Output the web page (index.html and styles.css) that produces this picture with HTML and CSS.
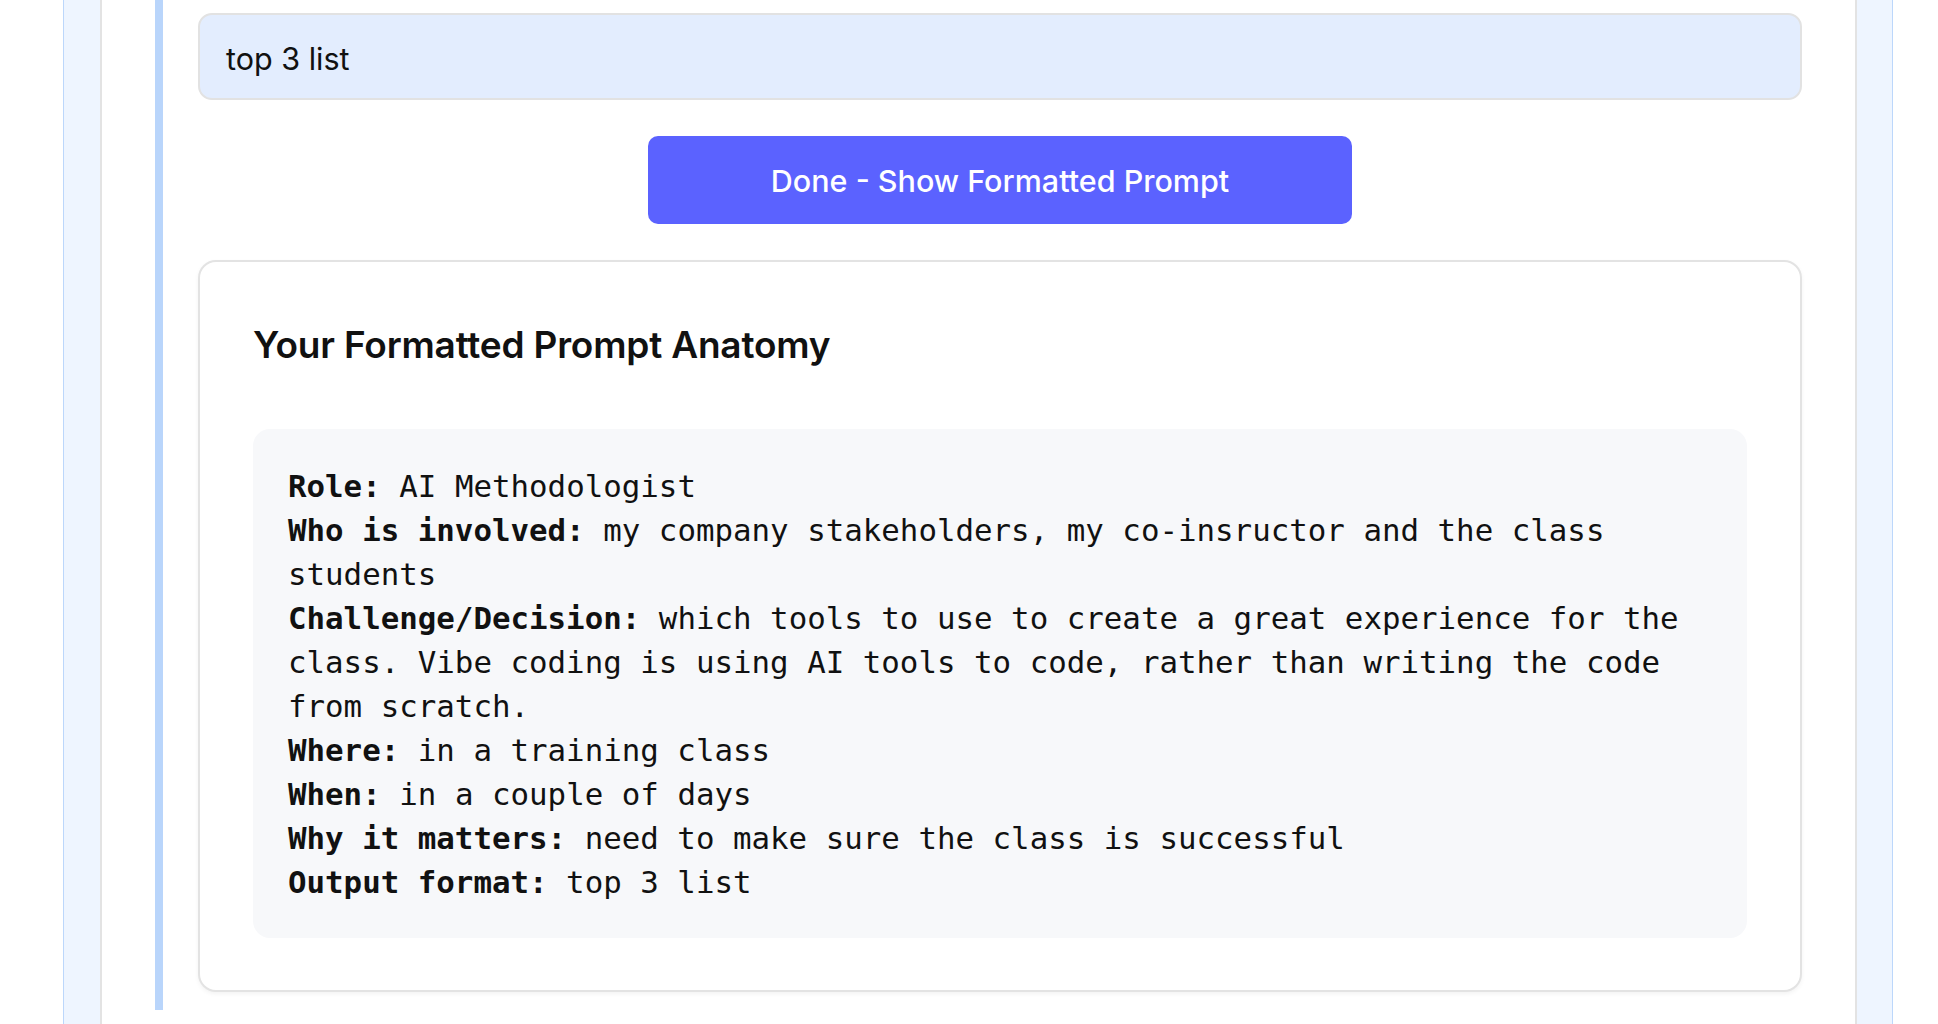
FILE: index.html
```html
<!DOCTYPE html>
<html lang="en">
<head>
<meta charset="utf-8">
<title>Formatted Prompt</title>
<link rel="stylesheet" href="styles.css">
</head>
<body>
<div class="outer">
  <div class="inner">
    <section class="step">
      <div class="answer">top 3 list</div>
      <div class="actions">
        <button class="done-btn" type="button">Done - Show Formatted Prompt</button>
      </div>
      <div class="result-card">
        <h3 class="result-title">Your Formatted Prompt Anatomy</h3>
        <pre class="prompt"><b>Role:</b> AI Methodologist
<b>Who is involved:</b> my company stakeholders, my co-insructor and the class students
<b>Challenge/Decision:</b> which tools to use to create a great experience for the class. Vibe coding is using AI tools to code, rather than writing the code from scratch.
<b>Where:</b> in a training class
<b>When:</b> in a couple of days
<b>Why it matters:</b> need to make sure the class is successful
<b>Output format:</b> top 3 list</pre>
      </div>
    </section>
  </div>
</div>
</body>
</html>
```

FILE: styles.css
```css
* {
  box-sizing: border-box;
}

html, body {
  margin: 0;
  padding: 0;
  background: #ffffff;
  height: 100%;
  overflow: hidden;
}

body {
  font-family: Inter, "Noto Sans", "Liberation Sans", sans-serif;
  color: #111111;
}

.outer {
  margin-left: 63px;
  width: 1830px;
  min-height: 1024px;
  background: #eef5ff;
  border-left: 1px solid #bcd7fb;
  border-right: 1px solid #bcd7fb;
  padding: 0 35px 0 36px;
}

.inner {
  background: #ffffff;
  border-left: 2px solid #e3e3e3;
  border-right: 2px solid #e3e3e3;
  min-height: 1024px;
  padding: 0 53px;
}

.step {
  border-left: 8px solid #b9d5fb;
  padding: 13px 0 18px 35px;
}

.answer {
  height: 87px;
  background: #e3edfe;
  border: 2px solid #e2e2e2;
  border-radius: 14px;
  padding: 3px 26px 0;
  display: flex;
  align-items: center;
  font-size: 30.5px;
  color: #111111;
}

.actions {
  display: flex;
  justify-content: center;
  margin-top: 36px;
}

.done-btn {
  width: 704px;
  height: 88px;
  border: none;
  border-radius: 10px;
  background: #5b62ff;
  color: #ffffff;
  font-family: Inter, "Noto Sans", "Liberation Sans", sans-serif;
  font-size: 30.5px;
  font-weight: 500;
  padding: 0;
}

.result-card {
  margin-top: 36px;
  border: 2px solid #e3e3e3;
  border-radius: 18px;
  background: #ffffff;
  box-shadow: 0 2px 4px rgba(0, 0, 0, 0.05);
  padding: 61px 53px 52px;
}

.result-title {
  margin: 0 0 62px;
  font-size: 37px;
  line-height: 44px;
  font-weight: 600;
  letter-spacing: -0.2px;
  color: #111111;
}

.prompt {
  margin: 0;
  background: #f7f8fa;
  border-radius: 17px;
  padding: 35px 35px 34px;
  font-family: "DejaVu Sans Mono", "Liberation Mono", monospace;
  font-size: 30.8px;
  line-height: 44px;
  color: #111111;
  white-space: pre-wrap;
  word-wrap: break-word;
}

.prompt b {
  font-weight: 700;
}
```
